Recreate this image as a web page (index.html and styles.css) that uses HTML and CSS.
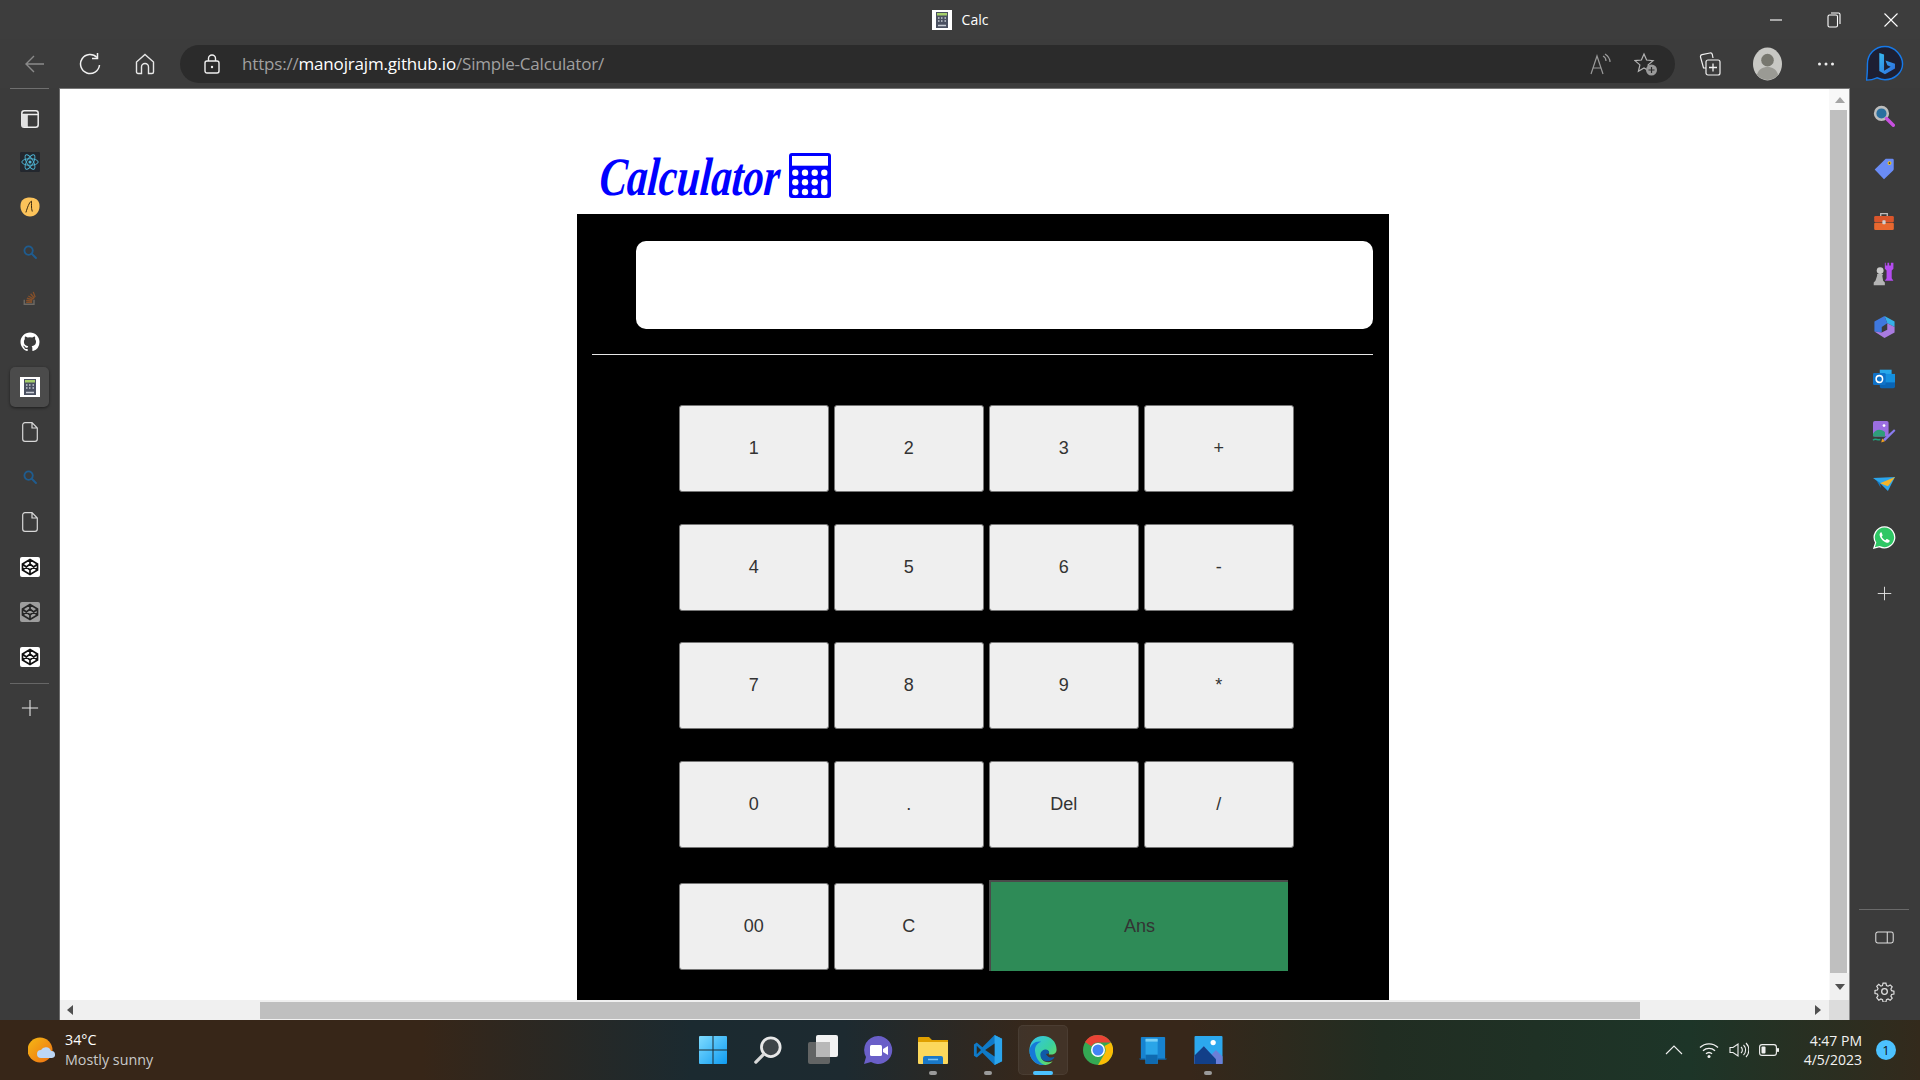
FILE: index.html
```html
<!DOCTYPE html>
<html lang="en">
<head>
<meta charset="utf-8">
<title>Calc</title>
<link rel="stylesheet" href="styles.css">
</head>
<body>
<svg class="defs" aria-hidden="true">
  <defs>
    <linearGradient id="bingG" x1="0" y1="0" x2="1" y2="1"><stop offset="0" stop-color="#37b8f0"/><stop offset="1" stop-color="#2c6be0"/></linearGradient>
    <linearGradient id="edgeG" x1="0" y1="0" x2="1" y2="1"><stop offset="0" stop-color="#35c1f1"/><stop offset=".55" stop-color="#3ad29f"/><stop offset="1" stop-color="#7fe04a"/></linearGradient>
    <linearGradient id="winG" x1="0" y1="0" x2="1" y2="1"><stop offset="0" stop-color="#7fdcff"/><stop offset="1" stop-color="#0f9bf0"/></linearGradient>
    <linearGradient id="sunG" x1="0" y1="0" x2="1" y2="1"><stop offset="0" stop-color="#f5b915"/><stop offset="1" stop-color="#ee6f12"/></linearGradient>
    <symbol id="calcFav" viewBox="0 0 20 20">
      <rect width="20" height="20" fill="#fff"/>
      <rect x="4" y="2" width="12" height="16" fill="#4a5060"/>
      <rect x="5" y="3" width="10" height="2.500" fill="#a6cf6a"/>
      <path d="M6 8h1.500M9 8h1.500M12.500 8H14M6 11h1.500M9 11h1.500M12.500 11H14M6 15.500h8" stroke="#c8ccd4" stroke-width="1.400"/>
    </symbol>
    <symbol id="doc" viewBox="0 0 16 20">
      <path d="M3 .7h7l5.300 5.300V17a2.300 2.300 0 0 1-2.300 2.300H3A2.300 2.300 0 0 1 .7 17V3A2.300 2.300 0 0 1 3 .7zM10 .7V6h5.300" fill="none" stroke="#d8d8d8" stroke-width="1.200"/>
    </symbol>
    <symbol id="pen" viewBox="0 0 20 20">
      <rect width="20" height="20" rx="2" fill="#fff"/>
      <path d="M10 2.500 17.500 7v6L10 17.500 2.500 13V7zM10 2.500V7M10 13v4.500M2.500 7 10 13l7.500-6M2.500 13 10 7l7.500 6" fill="none" stroke="#111" stroke-width="1.700"/>
    </symbol>
    <symbol id="glass" viewBox="0 0 20 20">
      <circle cx="8" cy="8" r="6" fill="none" stroke="#1f5c8f" stroke-width="2.600"/>
      <path d="m12.500 12.500 6 6" stroke="#1f5c8f" stroke-width="2.800" stroke-linecap="round"/>
    </symbol>
    <symbol id="plus" viewBox="0 0 20 20">
      <path d="M10 1v18M1 10h18" stroke="#e8e8e8" stroke-width="1.200"/>
    </symbol>
  </defs>
</svg>

<div class="app">
  <header class="titlebar">
    <div></div>
    <div class="tab-title">
      <svg class="ico20"><use href="#calcFav"/></svg>
      <span>Calc</span>
    </div>
    <div class="win-controls">
      <span class="win-btn"><svg width="14" height="14" viewBox="0 0 14 14"><path d="M1 7h12" stroke="#fff" stroke-width="1.100"/></svg></span>
      <span class="win-btn"><svg width="14" height="16" viewBox="0 0 14 16"><rect x="1" y="3" width="9.500" height="12" rx="1.500" fill="none" stroke="#fff" stroke-width="1.100"/><path d="M4 1h7.500A1.500 1.500 0 0 1 13 2.500V12" fill="none" stroke="#fff" stroke-width="1.100"/></svg></span>
      <span class="win-btn"><svg width="16" height="16" viewBox="0 0 16 16"><path d="m1.500 1.500 13 13M14.500 1.500l-13 13" stroke="#fff" stroke-width="1.100"/></svg></span>
    </div>
  </header>

  <nav class="toolbar">
    <span class="tool"><svg width="22" height="22" viewBox="0 0 22 22"><path d="M20 11H2.500M10 3l-8 8 8 8" fill="none" stroke="#8a8a8a" stroke-width="1.400"/></svg></span>
    <span class="tool"><svg width="22" height="24" viewBox="0 0 22 24"><path d="M18 5.500A9.500 9.500 0 1 0 20.500 13" fill="none" stroke="#f0f0f0" stroke-width="1.500"/><path d="M18.500 1v5.500H13" fill="none" stroke="#f0f0f0" stroke-width="1.500"/></svg></span>
    <span class="tool"><svg width="20" height="22" viewBox="0 0 20 22"><path d="M10 1.500 18.500 9v10a1.500 1.500 0 0 1-1.500 1.500h-3.500V14a3.500 3.500 0 0 0-7 0v6.500H3A1.500 1.500 0 0 1 1.500 19V9z" fill="none" stroke="#e8e8e8" stroke-width="1.400"/></svg></span>
    <div class="urlbar">
      <span class="lock"><svg width="16" height="20" viewBox="0 0 16 20"><rect x="1" y="7" width="14" height="12" rx="2" fill="none" stroke="#f0f0f0" stroke-width="1.400"/><path d="M4.500 7V4.500a3.500 3.500 0 0 1 7 0V7" fill="none" stroke="#f0f0f0" stroke-width="1.400"/><circle cx="8" cy="13" r="1.200" fill="#f0f0f0"/></svg></span>
      <span class="url"><span class="url-dim">https://</span><span class="url-host">manojrajm.github.io</span><span class="url-dim">/Simple-Calculator/</span></span>
      <span class="url-tools">
        <span class="url-tool"><svg width="22" height="22" viewBox="0 0 22 22"><path d="M1 21 7 3l6 18M3 15h8M13 3c2 1 3 3 3 5M15 1c3 2 5 5 5 8" fill="none" stroke="#9a9a9a" stroke-width="1.200"/></svg></span>
        <span class="url-tool"><svg width="24" height="24" viewBox="0 0 24 24"><path d="m10 2 2.600 6 6.500.6-5 4.300 1.500 6.400-5.600-3.400-5.600 3.400 1.500-6.400-5-4.300 6.500-.6z" fill="none" stroke="#b5b5b5" stroke-width="1.200"/><circle cx="17.500" cy="18" r="5.500" fill="#9a9a9a"/><path d="M17.500 15v6M14.500 18h6" stroke="#2b2b2b" stroke-width="1.200"/></svg></span>
      </span>
    </div>
    <span class="tool tool-coll"><svg width="22" height="24" viewBox="0 0 22 24"><path d="M7 16H4.500L1.500 5a2 2 0 0 1 1.500-2.300L11 1a2 2 0 0 1 2.300 1.500L14 6" fill="none" stroke="#f0f0f0" stroke-width="1.200"/><rect x="7" y="8" width="14" height="15" rx="2" fill="#3b3b3b" stroke="#f0f0f0" stroke-width="1.200"/><path d="M14 11.500v8M10 15.500h8" stroke="#f0f0f0" stroke-width="1.300"/></svg></span>
    <span class="tool tool-user"><svg width="29" height="34" viewBox="0 0 30 34"><ellipse cx="15" cy="17" rx="15" ry="17" fill="#c8c8c4"/><circle cx="15" cy="13" r="6.500" fill="#77776f"/><path d="M4 28c2-6 6-8 11-8s9 2 11 8a15 17 0 0 1-22 0z" fill="#9a9a94"/></svg></span>
    <span class="tool tool-more"><svg width="18" height="6" viewBox="0 0 18 6"><circle cx="2.500" cy="3" r="1.500" fill="#eee"/><circle cx="9" cy="3" r="1.500" fill="#eee"/><circle cx="15.500" cy="3" r="1.500" fill="#eee"/></svg></span>
    <span class="tool tool-bing"><svg width="38" height="38" viewBox="0 0 40 40"><path d="M20 1.500C9.500 1.500 1.500 9.500 1.500 20c0 5 0 11-1 17 4.500 0 8-1 11-2.500 2.500 1 5.500 2 8.500 2 10.500 0 18.500-8 18.500-16.500S30.500 1.500 20 1.500z" fill="#1d1f33" stroke="#1679e8" stroke-width="1.500"/><path d="M14 8.500 19 10v17l7-4-3.500-1.700-2-5 10 3.500v5l-10.500 6-6-3.500z" fill="url(#bingG)"/></svg></span>
  </nav>

  <div class="main">
    <aside class="rail-left">
      <div class="rail-sep"></div>
      <div class="rail-list">
        <span class="rail-item"><svg width="18" height="18" viewBox="0 0 18 18"><rect x=".8" y=".8" width="16.400" height="16.400" rx="2.500" fill="none" stroke="#eee" stroke-width="1.500"/><path d="M1 4.500h16M6 4.500V17" stroke="#eee" stroke-width="1.500"/><rect x="1" y="4.500" width="5" height="12.500" fill="#e0e0e0"/></svg></span>
        <span class="rail-item"><svg class="ico20" viewBox="0 0 22 22"><rect width="22" height="22" rx="1.500" fill="#23272e"/><g fill="none" stroke="#4fb8d8" stroke-width="1"><ellipse cx="11" cy="11" rx="9" ry="3.600"/><ellipse cx="11" cy="11" rx="9" ry="3.600" transform="rotate(60 11 11)"/><ellipse cx="11" cy="11" rx="9" ry="3.600" transform="rotate(120 11 11)"/></g><circle cx="11" cy="11" r="1.700" fill="#4fb8d8"/></svg></span>
        <span class="rail-item"><svg class="ico20" viewBox="0 0 22 22"><path d="M11 .5c6 0 10.500 3 10.500 9.500S17 21.500 11 21.500.5 17 .5 10 5 .5 11 .5z" fill="#fcc35a"/><path d="M6.500 17C8 12 10 6 12.500 4.500c.5 3-.5 7 1 11.500" fill="none" stroke="#3b2a10" stroke-width="1.100"/></svg></span>
        <span class="rail-item"><svg class="ico14"><use href="#glass"/></svg></span>
        <span class="rail-item"><svg width="15" height="17" viewBox="0 0 20 22"><path d="M3 14v6h13v-6" fill="none" stroke="#6f6a64" stroke-width="1.800"/><path d="M5.500 17.500h8M5.500 15l8 .7M6.500 12l7.500 2M8.500 9l7 4M11.500 6l5 6M15 3.500l2.500 7" stroke="#85502a" stroke-width="1.800"/></svg></span>
        <span class="rail-item"><svg class="ico20" viewBox="0 0 24 24"><path d="M12 .7C5.700.7.600 5.800.600 12.100c0 5 3.300 9.300 7.800 10.800.6.100.8-.2.800-.5v-2c-3.200.7-3.900-1.500-3.900-1.500-.5-1.300-1.300-1.700-1.300-1.700-1-.7.100-.7.100-.7 1.200.1 1.800 1.200 1.800 1.200 1 1.800 2.700 1.300 3.300 1 .1-.8.400-1.300.7-1.600-2.500-.3-5.200-1.300-5.200-5.600 0-1.200.4-2.300 1.200-3.100-.1-.3-.5-1.500.1-3 0 0 1-.3 3.100 1.200a11 11 0 0 1 5.700 0c2.200-1.500 3.100-1.200 3.100-1.200.6 1.500.2 2.700.1 3 .7.800 1.200 1.800 1.200 3.100 0 4.400-2.700 5.300-5.200 5.600.4.400.8 1 .8 2.100v3.100c0 .3.200.7.800.5a11.400 11.400 0 0 0 7.800-10.800C23.400 5.800 18.300.7 12 .7z" fill="#fff"/></svg></span>
        <span class="rail-item rail-active"><svg class="ico20"><use href="#calcFav"/></svg></span>
        <span class="rail-item"><svg class="doc"><use href="#doc"/></svg></span>
        <span class="rail-item"><svg class="ico14"><use href="#glass"/></svg></span>
        <span class="rail-item"><svg class="doc"><use href="#doc"/></svg></span>
        <span class="rail-item"><svg class="ico20"><use href="#pen"/></svg></span>
        <span class="rail-item dim"><svg class="ico20"><use href="#pen"/></svg></span>
        <span class="rail-item"><svg class="ico20"><use href="#pen"/></svg></span>
      </div>
      <div class="rail-div"></div>
      <span class="rail-item"><svg class="ico18"><use href="#plus"/></svg></span>
    </aside>

    <section class="viewport">
      <div class="page">
        <div class="heading">
          <h1 class="heading-text">Calculator</h1>
          <svg class="heading-icon" viewBox="0 0 42 45"><rect width="42" height="45" rx="3" fill="#0000ff"/><rect x="3" y="3" width="36" height="9.700" fill="#fff"/><g fill="#fff"><circle cx="6.300" cy="19.700" r="3.200"/><circle cx="16" cy="19.700" r="3.200"/><circle cx="25.700" cy="19.700" r="3.200"/><circle cx="35.300" cy="19.700" r="3.200"/><circle cx="6.300" cy="29.300" r="3.200"/><circle cx="16" cy="29.300" r="3.200"/><circle cx="25.700" cy="29.300" r="3.200"/><circle cx="6.300" cy="39" r="3.200"/><circle cx="16" cy="39" r="3.200"/><circle cx="25.700" cy="39" r="3.200"/><rect x="32.100" y="26.100" width="6.400" height="16.100" rx="3.200"/></g></svg>
        </div>
        <main class="calc">
          <div class="display"></div>
          <hr class="rule">
          <div class="keys">
            <button class="key">1</button><button class="key">2</button><button class="key">3</button><button class="key">+</button>
            <button class="key">4</button><button class="key">5</button><button class="key">6</button><button class="key">-</button>
            <button class="key">7</button><button class="key">8</button><button class="key">9</button><button class="key">*</button>
            <button class="key">0</button><button class="key">.</button><button class="key">Del</button><button class="key">/</button>
            <button class="key key-last">00</button><button class="key key-last">C</button><button class="key key-ans">Ans</button>
          </div>
        </main>
      </div>
      <div class="vscroll">
        <span class="vs-up"><i class="tri tri-up"></i></span>
        <span class="vs-thumb"></span>
        <span class="vs-down"><i class="tri tri-down"></i></span>
      </div>
      <div class="hscroll">
        <span class="hs-left"><i class="tri tri-left"></i></span>
        <span class="hs-thumb"></span>
        <span class="hs-right"><i class="tri tri-right"></i></span>
      </div>
      <div class="corner"></div>
    </section>

    <aside class="rail-right">
      <span class="rr-item"><svg width="22" height="22" viewBox="0 0 26 26"><circle cx="10" cy="10" r="7.500" fill="#2a6f9f" stroke="#bdbdbd" stroke-width="3"/><path d="m16 16 8 8" stroke="#c850e0" stroke-width="4" stroke-linecap="round"/></svg></span>
      <span class="rr-item"><svg width="22" height="22" viewBox="0 0 24 26"><path d="M14 1h8a1.500 1.500 0 0 1 1.500 1.500V13a3 3 0 0 1-1 2L12 25 1 13.500z" fill="#6a8cf5"/><circle cx="18.500" cy="6" r="2.300" fill="#f5c518"/><circle cx="18.500" cy="6" r="1" fill="#333"/></svg></span>
      <span class="rr-item"><svg width="22" height="18" viewBox="0 0 24 22"><path d="M8 5V2h8v3" fill="none" stroke="#bdbdbd" stroke-width="1.600"/><rect y="5" width="24" height="7.500" rx="1.500" fill="#d9552b"/><rect y="13" width="24" height="9" rx="1.500" fill="#e8682f"/><rect x="10" y="10" width="4" height="5" rx="1" fill="#d0d0d0"/></svg></span>
      <span class="rr-item"><svg width="22" height="24" viewBox="0 0 24 28"><path d="M14 1v3h2V1h2v3h2V1h3v7l-2 2v9l2 3H13l2-3v-9l-2-2V1z" fill="#b44cf0"/><circle cx="7.500" cy="10" r="4" fill="#c9c9c9"/><path d="M4 14h7l-1 2 1 6 2 2v3H0v-3l2-2 2-6z" fill="#b4b4b4"/></svg></span>
      <span class="rr-item"><svg width="21" height="22" viewBox="0 0 22 24"><path d="M11 0 22 6v6l-8-4z" fill="#35b1e8"/><path d="M0 6 11 0l3 8-6 4v6l-8-1z" fill="#3f78de"/><path d="M14 8l8 4v6l-11 6-11-7 8 1 6-3z" fill="#a97be0"/></svg></span>
      <span class="rr-item"><svg width="22" height="20" viewBox="0 0 26 22"><rect x="8" y="0" width="14" height="10" fill="#28a8ea"/><path d="M8 10h18v10a2 2 0 0 1-2 2H10a2 2 0 0 1-2-2z" fill="#0a64b4"/><rect x="14" y="5" width="12" height="10" fill="#1490df"/><rect x="0" y="4" width="15" height="14" rx="1.500" fill="#0f72c8"/><ellipse cx="7.500" cy="11" rx="3.800" ry="4" fill="none" stroke="#fff" stroke-width="1.800"/></svg></span>
      <span class="rr-item"><svg width="24" height="22" viewBox="0 0 26 24"><rect x="1" y="0" width="17" height="17" rx="2" fill="#9b6ee0"/><circle cx="13" cy="5" r="1.500" fill="#fff"/><path d="M1 14c3-5 8-6 13-2v5H1z" fill="#2f9e7a"/><path d="M1 21c3-3 5 1 8-1" fill="none" stroke="#1fa37a" stroke-width="1.500"/><path d="M12 20 24 9l1.500 1.500L14 22z" fill="#8a7cf0"/><path d="M11 19l3 3-4 1.500z" fill="#f0a020"/></svg></span>
      <span class="rr-item"><svg width="22" height="16" viewBox="0 0 28 18"><path d="M0 1.500 28 0 19 18 9 8z" fill="#2ba5ec"/><path d="M9 8 28 0 19 12z" fill="#f5b428"/><path d="M4 4 9 8l1 6z" fill="#1478c0"/></svg></span>
      <span class="rr-item"><svg width="23" height="23" viewBox="0 0 26 26"><path d="M13.200 1A11.800 11.800 0 0 0 3 18.800L1 25l6.400-1.700A11.800 11.800 0 1 0 13.200 1z" fill="#2fc765" stroke="#fff" stroke-width="1.400"/><path d="M9 7c-1 .5-1.800 2-1.500 3.500.5 3 4 7.500 8 8.500 1.700.3 3-.7 3.400-2 .1-.6 0-.8-.4-1l-2.500-1.200c-.4-.2-.6-.1-.9.200l-1 1.100c-2-.7-3.500-2.300-4.300-4l.9-1c.2-.3.200-.5.100-.8L9.800 7.500C9.600 7 9.400 6.900 9 7z" fill="#fff"/></svg></span>
      <span class="rr-item rr-plus"><svg class="ico15"><use href="#plus"/></svg></span>
      <div class="rr-spacer"></div>
      <div class="rr-div"></div>
      <span class="rr-bottom"><svg width="19" height="15" viewBox="0 0 24 16"><rect x="1" y="1" width="22" height="14" rx="2.500" fill="none" stroke="#e0e0e0" stroke-width="1.300"/><path d="M15.500 1v14" stroke="#e0e0e0" stroke-width="1.300"/></svg></span>
      <span class="rr-bottom"><svg width="21" height="21" viewBox="0 0 26 26"><path d="M11 1.500h4l.7 3.300 2.200.9 2.900-1.800 2.800 2.800-1.800 2.900.9 2.200 3.300.7v4l-3.300.7-.9 2.200 1.800 2.900-2.800 2.800-2.900-1.800-2.200.9-.7 3.300h-4l-.7-3.300-2.200-.9-2.900 1.800L2.300 21.500l1.800-2.900-.9-2.200-3.300-.7v-4l3.300-.7.9-2.200-1.800-2.900 2.800-2.800L8 5.700l2.200-.9z" transform="translate(1.300 1.300) scale(.9)" fill="none" stroke="#e0e0e0" stroke-width="1.600"/><circle cx="13" cy="13" r="3.500" fill="none" stroke="#e0e0e0" stroke-width="1.600"/></svg></span>
    </aside>
  </div>

  <footer class="taskbar">
    <div class="weather">
      <svg width="28" height="26" viewBox="0 0 28 26"><circle cx="12" cy="13" r="12.500" fill="url(#sunG)"/><path d="M13 21a4 4 0 0 1 0-8 5.500 5.500 0 0 1 10 1 3.500 3.500 0 0 1 1 7z" fill="#bcd6f5"/></svg>
      <div class="weather-text">
        <span class="temp">34°C</span>
        <span class="cond">Mostly sunny</span>
      </div>
    </div>
    <div class="apps">
      <span class="app-icon"><svg width="30" height="30" viewBox="0 0 30 30"><path d="M1 2a1 1 0 0 1 1-1h12.500v13.500H1zM15.500 1H28a1 1 0 0 1 1 1v12.500H15.500zM1 15.500h13.500V29H2a1 1 0 0 1-1-1zM15.500 15.500H29V28a1 1 0 0 1-1 1H15.500z" fill="url(#winG)"/></svg></span>
      <span class="app-icon"><svg width="28" height="28" viewBox="0 0 30 30"><circle cx="18" cy="12" r="10" fill="#3d4448" stroke="#e8e8e8" stroke-width="3"/><path d="M10 20 2 28" stroke="#d8d8d8" stroke-width="3.500" stroke-linecap="round"/></svg></span>
      <span class="app-icon"><svg width="30" height="30" viewBox="0 0 30 30"><rect x="8" y="0" width="22" height="22" rx="2" fill="#f2f2f2"/><rect x="0" y="7" width="22" height="22" rx="2" fill="#6a6a6a" opacity=".9"/><rect x="8" y="7" width="14" height="15" fill="#b8b8b8"/></svg></span>
      <span class="app-icon"><svg width="30" height="30" viewBox="0 0 30 30"><path d="M15 1a14 14 0 0 0-12 21l-2 7 7-2A14 14 0 1 0 15 1z" fill="#6a5fc8"/><rect x="7" y="10" width="12" height="11" rx="1.500" fill="#fff"/><path d="m20 14 5-3v9l-5-3z" fill="#fff"/></svg></span>
      <span class="app-icon has-dot"><svg width="30" height="28" viewBox="0 0 30 28"><path d="M0 2a1 1 0 0 1 1-1h10l3 3h16v8H0z" fill="#e0a000"/><path d="M0 6h30v21a1 1 0 0 1-1 1H1a1 1 0 0 1-1-1z" fill="#fcd85c"/><path d="M5 28v-6a2 2 0 0 1 2-2h16a2 2 0 0 1 2 2v6z" fill="#1a78c8"/><path d="M10 23.500h10" stroke="#7cc4f5" stroke-width="1.500"/></svg></span>
      <span class="app-icon has-dot"><svg width="30" height="30" viewBox="0 0 30 32"><path d="M22 0l8 4v24l-8 4-13-13-6 5-3-2v-12l3-2 6 5z" fill="#0f7ac8"/><path d="M22 0l8 4v24l-8 4z" fill="#2ba5ec"/><path d="M22 9 12 16l10 7z" fill="#2b2a22"/><path d="M3 11.500 7.500 16 3 20.500z" fill="#2b2a22"/></svg></span>
      <span class="app-icon app-active"><svg width="30" height="31" viewBox="0 0 30 32"><path d="M15 1C7 1 1 7 1 16c0 8 6 15 14 15 4 0 8-1 10-4-4 2-9 1-11-2-2-3-1-8 3-9s5 2 4 4c5 1 8-1 8-5C29 7 23 1 15 1z" fill="url(#edgeG)"/><path d="M1 16C2 9 8 6 13 7c-5 2-7 6-6 11 1 6 4 11 10 13-9 1-16-6-16-15z" fill="#1679d8"/><path d="M14 25c-3-4-2-9 3-10 3 0 5 2 4 4l-3 .5c2 3 5 5 9 3-2 5-9 6-13 2.500z" fill="#0f5aa8"/></svg></span>
      <span class="app-icon"><svg width="30" height="30" viewBox="0 0 30 30"><circle cx="15" cy="15" r="15" fill="#34a853"/><path d="M15 0a15 15 0 0 1 13 7.500H15a7.500 7.500 0 0 0-6.500 3.700L2 7A15 15 0 0 1 15 0z" fill="#ea4335"/><path d="M28 7.500A15 15 0 0 1 15 30l6.500-11.200A7.500 7.500 0 0 0 21.500 11z" fill="#fbbc05"/><circle cx="15" cy="15" r="7" fill="#fff"/><circle cx="15" cy="15" r="5.500" fill="#4285f4"/></svg></span>
      <span class="app-icon"><svg width="30" height="28" viewBox="0 0 30 30"><rect x="2" y="1" width="26" height="24" rx="1" fill="#1783d0"/><path d="M0 24h30l-1 1.500H1z" fill="#0f5fa0"/><rect x="7" y="3" width="13" height="27" rx="1" fill="#2aa5e8"/><rect x="7" y="3" width="13" height="3" fill="#7ad0f5"/><rect x="7" y="20" width="13" height="10" fill="#0f6ab0"/></svg></span>
      <span class="app-icon has-dot"><svg width="29" height="28" viewBox="0 0 30 30"><rect width="30" height="30" rx="1" fill="#2ca8ee"/><circle cx="20" cy="7" r="2.800" fill="#fff"/><path d="M0 22 10 11l8 9 5-5 7 7v8H0z" fill="#6a7fd8"/><path d="M0 30V21l10-10 13 14 0 5z" fill="#123f88"/></svg></span>
    </div>
    <div class="tray">
      <span class="tray-icon tray-chevron"><svg width="18" height="10" viewBox="0 0 18 10"><path d="M1 9 9 1l8 8" fill="none" stroke="#f0f0f0" stroke-width="1.100"/></svg></span>
      <span class="tray-icon"><svg width="20" height="16" viewBox="0 0 20 16"><path d="M1 5.500a13 13 0 0 1 18 0M4 8.700a9 9 0 0 1 12 0M7 11.800a4.500 4.500 0 0 1 6 0" fill="none" stroke="#f0f0f0" stroke-width="1.400"/><circle cx="10" cy="14.500" r="1.500" fill="#f0f0f0"/></svg></span>
      <span class="tray-icon"><svg width="20" height="16" viewBox="0 0 20 16"><path d="M1 5.500h3L9 2v12L4 10.500H1z" fill="none" stroke="#f0f0f0" stroke-width="1.100"/><path d="M12 5a4 4 0 0 1 0 6M14.500 3a7 7 0 0 1 0 10M17 1a10 10 0 0 1 0 14" fill="none" stroke="#f0f0f0" stroke-width="1.100"/></svg></span>
      <span class="tray-icon"><svg width="20" height="12" viewBox="0 0 20 12"><rect x=".6" y=".6" width="16.800" height="10.800" rx="2.500" fill="none" stroke="#f0f0f0" stroke-width="1.100"/><rect x="2.500" y="2.500" width="4" height="7" rx="1" fill="#f0f0f0"/><rect x="18" y="4" width="2" height="4" rx=".8" fill="#f0f0f0"/></svg></span>
      <div class="clock"><span>4:47 PM</span><span>4/5/2023</span></div>
      <span class="badge">1</span>
    </div>
  </footer>
</div>
</body>
</html>
```

FILE: styles.css
```css
* { box-sizing: border-box; }
html, body { margin: 0; padding: 0; height: 100%; overflow: hidden; }
body { font-family: "Open Sans", "Liberation Sans", sans-serif; background: #3b3b3b; color: #fff; }
.defs { position: absolute; width: 0; height: 0; }
.ico20 { width: 20px; height: 20px; display: block; }
.ico18 { width: 18px; height: 18px; display: block; }
.ico15 { width: 15px; height: 15px; display: block; }
.ico14 { width: 14px; height: 14px; display: block; }
.doc { width: 16px; height: 20px; display: block; }

.app { width: 1920px; height: 1080px; display: flex; flex-direction: column; }

/* title bar */
.titlebar { height: 39px; flex: none; display: grid; grid-template-columns: 1fr auto 1fr; background: #3d3d3d; }
.tab-title { display: flex; align-items: center; gap: 10px; font-size: 14px; }
.win-controls { display: flex; justify-content: flex-end; }
.win-btn { width: 57.500px; display: flex; align-items: center; justify-content: center; }

/* toolbar */
.toolbar { height: 49px; flex: none; display: flex; align-items: center; padding: 6px 5px 5px 7.500px; background: #3c3c3c; }
.tool { width: 55px; flex: none; display: flex; align-items: center; justify-content: center; }
.tool-coll { margin-left: 7px; }
.tool-user { width: 58px; margin-left: 1.500px; }
.tool-more { width: 58px; }
.tool-bing { width: 60px; }
.urlbar { width: 1495px; height: 38px; margin-left: 7.500px; flex: none; display: flex; align-items: center; padding: 0 6.500px 0 24px; border-radius: 19px; background: #2b2b2b; }
.lock { width: 16px; display: flex; margin-right: 22px; }
.url { font-size: 17px; line-height: 22px; padding-bottom: 1px; letter-spacing: -.18px; white-space: nowrap; }
.url-dim { color: #a0a0a0; }
.url-host { color: #fff; }
.url-tools { margin-left: auto; display: flex; }
.url-tool { width: 45px; display: flex; align-items: center; justify-content: center; }

/* body row */
.main { height: 932px; flex: none; display: flex; }
.rail-left { width: 60px; flex: none; display: flex; flex-direction: column; border-right: 1px solid #6a6a6a; background: #3b3b3b; }
.rail-sep { height: 1px; margin: 0 10px; background: #6f6f6f; }
.rail-list { padding-top: 5.500px; display: flex; flex-direction: column; }
.rail-item { height: 45px; flex: none; display: flex; align-items: center; justify-content: center; position: relative; }
.rail-list .rail-item:first-child { padding-top: 4px; }
.rail-active::before { content: ""; position: absolute; left: 10px; right: 10px; top: 2.500px; bottom: 2.500px; border-radius: 5px; background: #4b4b4b; box-shadow: 0 1px 3px rgba(0, 0, 0, .5); }
.rail-active svg { position: relative; }
.dim { opacity: .5; }
.rail-div { height: 1px; margin: 3px 10px 2px; background: #666; flex: none; }

/* viewport */
.viewport { flex: 1; min-width: 0; display: grid; grid-template-columns: 1fr 21px; grid-template-rows: 1fr 20px; border-top: 1px solid #777; background: #fff; }
.page { overflow: hidden; background: #fff; color: #000; }
.heading { height: 125px; display: flex; align-items: flex-start; padding: 64px 0 0 540px; }
.heading-text { margin: -1px 0 0; width: 184px; font: italic 700 54px/50px "Liberation Serif", serif; color: #00f; transform: scaleX(.76) skewX(-6deg); transform-origin: 0 50%; white-space: nowrap; }
.heading-icon { width: 42px; height: 45px; flex: none; margin: 0 0 0 5px; }
.calc { width: 812px; height: 800px; margin-left: 517px; background: #000; padding: 27px 16px 0 15px; }
.display { height: 88px; margin-left: 44px; border-radius: 10px; background: #fff; }
.rule { margin: 25px 0 0; border: 0; height: 1px; background: #e6e6e6; }
.keys { margin: 50px 0 0 87px; display: grid; grid-template-columns: repeat(4, 149.500px); column-gap: 5.500px; row-gap: 31.700px; grid-auto-rows: 87px; align-items: center; }
.key { height: 87px; padding: 0; font: 400 18px "Liberation Sans", sans-serif; color: #333; background: #efefef; border: 1px solid #767676; border-radius: 3px; }
.key-last { margin-top: 6.400px; }
.key-ans { grid-column: span 2; width: 299px; height: 91px; margin-top: 4.400px; background: #2e8b57; border: 0; border-top: 2px solid #4a4a4a; border-left: 2px solid #4a4a4a; border-radius: 0; color: #333; }

/* scrollbars */
.vscroll { display: flex; flex-direction: column; align-items: stretch; background: #f8f8f8; border-right: 1px solid #8a8a8a; padding-left: 1px; }
.vs-up { height: 21px; display: flex; align-items: center; justify-content: center; }
.vs-thumb { height: 863px; width: 17px; background: #bfbfbf; }
.vs-down { height: 27px; display: flex; align-items: center; justify-content: center; background: #f0f0f0; }
.hscroll { display: flex; align-items: center; background: #f0f0f0; }
.hs-left { width: 200px; padding-left: 7px; display: flex; }
.hs-thumb { width: 1380px; height: 17px; background: #bfbfbf; }
.hs-right { flex: 1; display: flex; justify-content: flex-end; padding-right: 8px; }
.corner { background: #dcdcdc; border-right: 1px solid #8a8a8a; }
.tri { display: block; width: 0; height: 0; border-style: solid; border-color: transparent; }
.tri-up { border-width: 0 5px 6px; border-bottom-color: #a5a5a5; }
.tri-down { border-width: 6px 5px 0; border-top-color: #505050; }
.tri-left { border-width: 5px 6px 5px 0; border-right-color: #505050; }
.tri-right { border-width: 5px 0 5px 6px; border-left-color: #505050; }

/* right rail */
.rail-right { width: 70px; flex: none; display: flex; flex-direction: column; align-items: stretch; padding: 2px 2px 2px 0; background: #3b3b3b; }
.rr-item { height: 52.600px; flex: none; display: flex; align-items: center; justify-content: center; }
.rr-plus { margin-top: 4px; }
.rr-spacer { flex: 1; }
.rr-div { height: 1px; flex: none; margin: 0 9px 0 9px; background: #6a6a6a; }
.rr-bottom { height: 54px; flex: none; display: flex; align-items: center; justify-content: center; }

/* taskbar */
.taskbar { height: 60px; flex: none; display: grid; grid-template-columns: 685.500px 550px 1fr; align-items: center;
  background: linear-gradient(90deg, #372618 0%, #372618 22%, #1b2a30 36%, #1d2a30 44%, #37271a 54%, #37271a 62%, #212d22 72%, #1d3528 88%, #332a1c 100%); }
.weather { display: flex; align-items: center; padding-left: 28px; gap: 9px; }
.weather-text { display: flex; flex-direction: column; font-size: 14.300px; line-height: 20px; }
.temp { color: #fff; }
.cond { color: #c9c9c9; }
.apps { display: flex; align-items: center; }
.app-icon { width: 55px; height: 50px; display: flex; align-items: center; justify-content: center; position: relative; }
.app-icon svg { position: relative; }
.has-dot::after { content: ""; position: absolute; left: 23.500px; bottom: 0; width: 8px; height: 4px; border-radius: 2px; background: #9a9a9a; }
.app-active::before { content: ""; position: absolute; inset: 0 2.500px; background: rgba(255, 255, 255, .06); border-radius: 5px; box-shadow: inset 0 0 0 1px rgba(255, 255, 255, .05); }
.app-active::after { content: ""; position: absolute; left: 17.500px; bottom: 0; width: 20px; height: 4px; border-radius: 2px; background: #4cc2ff; }
.tray { display: flex; align-items: center; justify-content: flex-end; padding-right: 24px; }
.tray-icon { width: 30px; display: flex; align-items: center; justify-content: center; }
.tray-chevron { margin-right: 5px; }
.clock { display: flex; flex-direction: column; align-items: flex-end; margin: 0 14px 0 15px; width: 63px; font-size: 14px; line-height: 19px; color: #f2f2f2; white-space: nowrap; }
.badge { width: 20px; height: 20px; border-radius: 50%; background: #4cc2ff; color: #111; font-size: 13px; line-height: 20px; text-align: center; }
```
